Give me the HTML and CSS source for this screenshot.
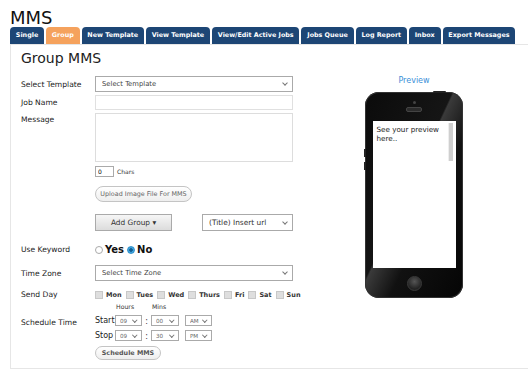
FILE: index.html
```html
<!DOCTYPE html>
<html lang="en">
<head>
  <meta charset="UTF-8">
  <meta name="viewport" content="width=device-width, initial-scale=1.0">
  <title>MMS</title>
  <link rel="stylesheet" href="styles.css">
</head>
<body>
  <h1 class="title">MMS</h1>
  <ul class="tabs">
    <li><a href="#">Single</a></li>
    <li class="active"><a href="#">Group</a></li>
    <li><a href="#">New Template</a></li>
    <li><a href="#">View Template</a></li>
    <li><a href="#">View/Edit Active Jobs</a></li>
    <li><a href="#">Jobs Queue</a></li>
    <li><a href="#">Log Report</a></li>
    <li><a href="#">Inbox</a></li>
    <li><a href="#">Export Messages</a></li>
  </ul>

  <div class="panel">
    <div class="form-col">
      <h2>Group MMS</h2>

      <div class="row">
        <label for="template">Select Template</label>
        <span class="sel"><select id="template" class="wide"><option>Select Template</option></select></span>
      </div>

      <div class="row gap3">
        <label for="jobName">Job Name</label>
        <input id="jobName" type="text" class="wide text">
      </div>

      <div class="row top gap3">
        <label for="message">Message</label>
        <textarea id="message" class="wide"></textarea>
      </div>

      <div class="row gap4">
        <span class="lbl"></span>
        <input type="text" class="chars" value="0"> <span class="chars-lbl">Chars</span>
      </div>

      <div class="row gap9">
        <span class="lbl"></span>
        <button class="pill upload">Upload Image File For MMS</button>
      </div>

      <div class="row gap12">
        <span class="lbl"></span>
        <button class="add-group">Add Group &#9662;</button>
        <span class="sel url-wrap"><select class="url"><option>(Title) Insert url</option></select></span>
      </div>

      <div class="row gap13">
        <label>Use Keyword</label>
        <div class="radios">
          <input type="radio" name="kw" id="kwYes"><label for="kwYes">Yes</label>
          <input type="radio" name="kw" id="kwNo" checked><label for="kwNo">No</label>
        </div>
      </div>

      <div class="row gap10">
        <label for="zone">Time Zone</label>
        <span class="sel"><select id="zone" class="wide"><option>Select Time Zone</option></select></span>
      </div>

      <div class="row gap9">
        <label>Send Day</label>
        <div class="days">
          <input type="checkbox"><span>Mon</span>
          <input type="checkbox"><span>Tues</span>
          <input type="checkbox"><span>Wed</span>
          <input type="checkbox"><span>Thurs</span>
          <input type="checkbox"><span>Fri</span>
          <input type="checkbox"><span>Sat</span>
          <input type="checkbox"><span>Sun</span>
        </div>
      </div>

      <div class="row gap4">
        <label>Schedule Time</label>
        <div class="times">
          <div class="time-head"><span class="h">Hours</span><span class="m">Mins</span></div>
          <div class="time-row">
            <span class="tl">Start</span>
            <span class="sel sm"><select class="hr"><option>09</option></select></span>
            <span class="colon">:</span>
            <span class="sel sm"><select class="mn"><option>00</option></select></span>
            <span class="sel sm ap-wrap"><select class="ap"><option>AM</option></select></span>
          </div>
          <div class="time-row">
            <span class="tl">Stop</span>
            <span class="sel sm"><select class="hr"><option>09</option></select></span>
            <span class="colon">:</span>
            <span class="sel sm"><select class="mn"><option>30</option></select></span>
            <span class="sel sm ap-wrap"><select class="ap"><option>PM</option></select></span>
          </div>
        </div>
      </div>

      <div class="row gap5">
        <span class="lbl"></span>
        <button class="pill schedule">Schedule MMS</button>
      </div>
    </div>

    <div class="preview-col">
      <div class="preview-title">Preview</div>
      <div class="phone">
        <span class="side-btn top"></span>
        <span class="side-btn left1"></span>
        <span class="side-btn left2"></span>
        <div class="bezel-top">
          <span class="camera"></span>
          <span class="speaker"></span>
        </div>
        <div class="screen">
          <p>See your preview here..</p>
          <span class="scrollbar"></span>
        </div>
        <div class="bezel-bottom">
          <span class="home"></span>
        </div>
      </div>
    </div>
  </div>
</body>
</html>
```

FILE: styles.css
```css
html {
  overflow: hidden;
}

body {
  font-family: 'DejaVu Sans', Verdana, sans-serif;
  margin: 0;
  padding: 0 0 0 10px;
  background: #fff;
  color: #222;
}

.title {
  font-size: 18px;
  font-weight: normal;
  line-height: 20px;
  margin: 8px 0 0 0;
  color: #111;
}

.tabs {
  list-style: none;
  display: flex;
  gap: 2px;
  margin: -1px 0 0 0;
  padding: 0;
  height: 17px;
}

.tabs li {
  background-color: #1d4675;
  border-radius: 4px 4px 0 0;
}

.tabs li.active {
  background-color: #f5a25d;
}

.tabs a {
  display: block;
  color: #fff;
  font-size: 6.4px;
  font-weight: bold;
  line-height: 17px;
  padding: 0 5.8px;
  text-decoration: none;
}

.panel {
  display: flex;
  width: 540px;
  border: 1px solid #e6e6e6;
  border-right: none;
  padding: 5px 0 8px 10px;
  box-sizing: border-box;
}

.form-col {
  width: 300px;
}

h2 {
  font-size: 14px;
  font-weight: normal;
  line-height: 16px;
  margin: 0 0 10px 0;
  color: #222;
}

.row {
  display: flex;
  align-items: center;
}

.row.top {
  align-items: flex-start;
}

.gap3 { margin-top: 3px; }
.gap4 { margin-top: 4px; }
.gap5 { margin-top: 5px; }
.gap9 { margin-top: 9px; }
.gap10 { margin-top: 10px; }
.gap12 { margin-top: 12px; }
.gap13 { margin-top: 13px; }

.row > label,
.row > .lbl {
  width: 74px;
  flex: none;
  font-size: 7.6px;
  color: #222;
}

.row.top > label {
  padding-top: 2px;
}

select,
input,
textarea,
button {
  font-family: 'DejaVu Sans', Verdana, sans-serif;
  margin: 0;
}

select {
  appearance: none;
  border: 1px solid #aaa;
  border-radius: 0;
  background: #fff;
  color: #444;
  font-size: 6.8px;
  padding: 0 0 0 6px;
  display: block;
}

/* wrapper draws the small grey chevron */
.sel {
  position: relative;
  display: inline-block;
}

.sel::after {
  content: "";
  position: absolute;
  right: 6px;
  top: 50%;
  width: 3px;
  height: 3px;
  margin-top: -3px;
  border-right: 1px solid #777;
  border-bottom: 1px solid #777;
  transform: rotate(45deg);
  pointer-events: none;
}

.sel.sm::after {
  right: 6px;
  width: 2.5px;
  height: 2.5px;
  margin-top: -2.5px;
}

.wide {
  width: 198px;
  box-sizing: border-box;
}

select.wide {
  height: 16px;
}

.text {
  height: 15px;
  border: 1px solid #e0e0e0;
}

textarea {
  height: 49px;
  border: 1px solid #ddd;
  resize: none;
}

.chars {
  width: 19px;
  height: 11px;
  box-sizing: border-box;
  border: 1px solid #aaa;
  font-size: 6px;
  padding: 0 2px;
}

.chars-lbl {
  font-size: 6px;
  margin-left: 3px;
  color: #333;
}

.pill {
  border: 1px solid #c4c4c4;
  border-radius: 9px;
  background: linear-gradient(#fff, #eee);
  color: #666;
  font-size: 6.4px;
  padding: 0;
}

.upload {
  width: 97px;
  height: 16px;
}

.add-group {
  width: 77px;
  height: 17px;
  border: 1px solid #aaa;
  border-radius: 0;
  background: linear-gradient(#f6f6f6, #dcdcdc);
  color: #333;
  font-size: 7.4px;
  padding: 0;
}

.url-wrap {
  margin-left: 30px;
}

.url {
  width: 91px;
  height: 17px;
  font-size: 7.4px;
  color: #333;
}

.radios {
  display: flex;
  align-items: center;
}

.radios input {
  appearance: none;
  width: 8px;
  height: 8px;
  border: 1px solid #aaa;
  border-radius: 50%;
  background: #fff;
  margin: 0 2px 0 0;
}

.radios input:checked {
  border-color: #2f8fc8;
  background: radial-gradient(circle, #155f91 0 1.5px, #3fa5e0 2px);
}

.radios label {
  font-size: 10px;
  font-weight: bold;
  color: #111;
  margin-right: 3px;
}

.days {
  display: flex;
  align-items: center;
}

.days input {
  appearance: none;
  width: 8px;
  height: 8px;
  border: 1px solid #c8c8c8;
  background: #dedede;
  margin: 0 3px 0 0;
}

.days span {
  font-size: 6.5px;
  font-weight: bold;
  color: #333;
  margin-right: 4px;
}

.times {
  display: flex;
  flex-direction: column;
}

.time-head {
  font-size: 6.2px;
  color: #333;
  height: 8px;
  line-height: 8px;
}

.time-head .h {
  display: inline-block;
  margin-left: 21px;
  width: 36px;
}

.time-row {
  display: flex;
  align-items: center;
  margin-top: 4px;
}

.time-row .tl {
  font-size: 8px;
  width: 20px;
  color: #222;
}

.time-row select {
  height: 11px;
  font-size: 5.6px;
  color: #666;
  padding: 0 0 0 4px;
}

.time-row .hr { width: 27px; }
.time-row .mn { width: 28px; }
.time-row .ap { width: 27px; }

.ap-wrap {
  margin-left: 6px;
}

.colon {
  font-size: 8px;
  width: 9px;
  text-align: center;
  color: #333;
  padding-top: 2px;
}

.schedule {
  width: 66px;
  height: 14px;
  font-weight: bold;
  color: #555;
}

.preview-col {
  display: flex;
  flex-direction: column;
  align-items: center;
  width: 124px;
  margin-left: 31px;
}

.preview-title {
  color: #3b8fd8;
  font-size: 8px;
  line-height: 10px;
  margin-top: 26px;
}

.phone {
  position: relative;
  margin-top: 6px;
  width: 98px;
  height: 206px;
  border-radius: 14px;
  background: linear-gradient(115deg, #0b0b0b 0%, #151515 45%, #3a3a3a 46%, #111 62%, #050505 100%);
  box-shadow: inset 0 0 0 1px #333;
  display: flex;
  flex-direction: column;
  align-items: center;
}

.side-btn {
  position: absolute;
  background: #222;
}

.side-btn.top {
  top: -1px;
  right: 17px;
  width: 13px;
  height: 2px;
  border-radius: 1px;
}

.side-btn.left1 {
  left: -1px;
  top: 57px;
  width: 2px;
  height: 8px;
}

.side-btn.left2 {
  left: -1px;
  top: 70px;
  width: 2px;
  height: 8px;
}

.bezel-top {
  height: 29px;
  display: flex;
  flex-direction: column;
  align-items: center;
}

.camera {
  width: 3px;
  height: 3px;
  border-radius: 50%;
  background: #444;
  margin-top: 9px;
}

.speaker {
  width: 14px;
  height: 3px;
  border-radius: 2px;
  background: #2b2b2b;
  border: 1px solid #444;
  margin-top: 3px;
}

.screen {
  position: relative;
  width: 83px;
  height: 147px;
  background: #fff;
  box-sizing: border-box;
  padding: 4px 10px 0 4px;
}

.screen p {
  margin: 0;
  font-size: 7.2px;
  line-height: 9px;
  color: #222;
}

.scrollbar {
  position: absolute;
  right: 3px;
  top: 2px;
  width: 4px;
  height: 38px;
  background: #cfcfcf;
  border-left: 1px solid #eee;
}

.bezel-bottom {
  flex: 1;
  display: flex;
  align-items: center;
  justify-content: center;
}

.home {
  width: 13px;
  height: 13px;
  border-radius: 50%;
  background: radial-gradient(circle at 50% 35%, #555, #222 70%);
  border: 1px solid #3a3a3a;
}
```
